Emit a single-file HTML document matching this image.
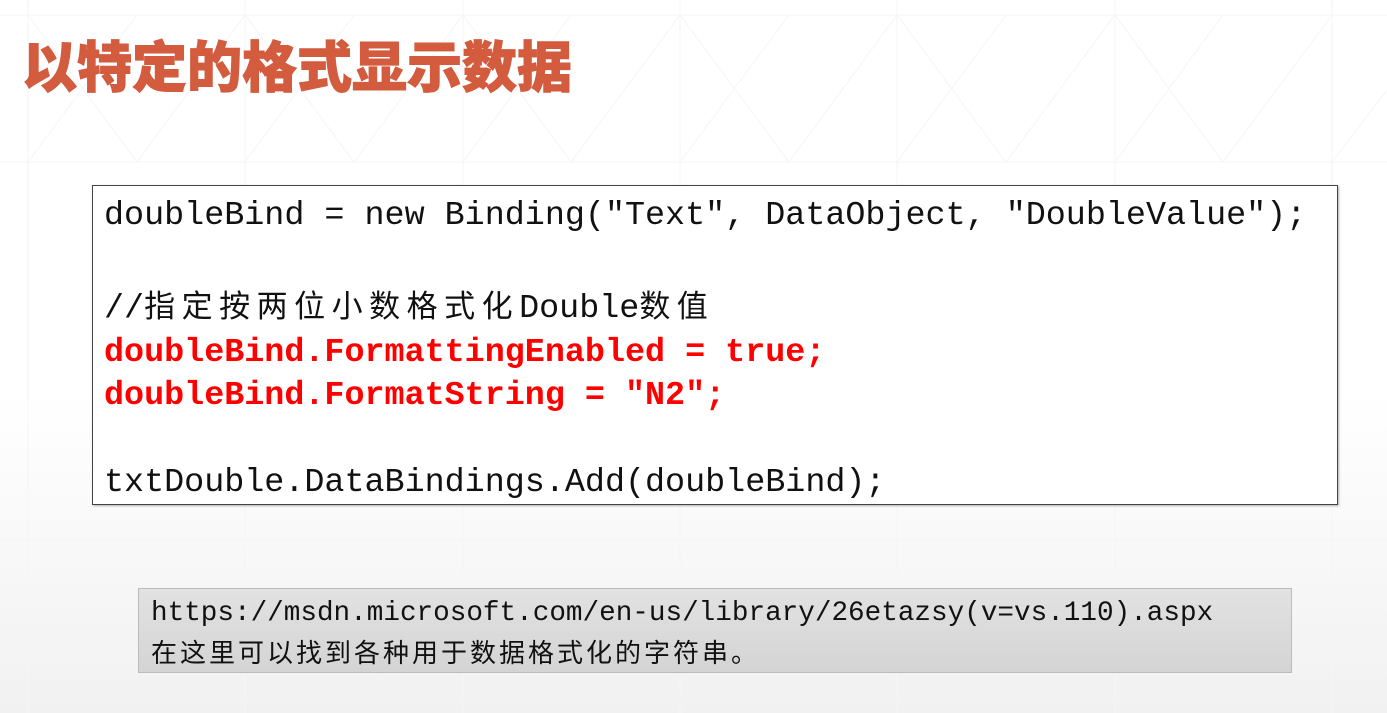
<!DOCTYPE html>
<html><head><meta charset="utf-8"><style>
html,body{margin:0;padding:0}
body{width:1387px;height:713px;position:relative;overflow:hidden;background:linear-gradient(#fff 0%,#fff 55%,#f1f1f1 100%);font-family:"Liberation Sans","Noto Sans CJK SC",sans-serif}
.bg{position:absolute;left:0;top:0}
h1{position:absolute;left:22px;top:28px;margin:0;font-size:55px;line-height:70px;font-weight:900;color:#d35b3e;font-family:"Noto Sans CJK SC",sans-serif;-webkit-text-stroke:1px #d35b3e}
.code{position:absolute;left:92px;top:185px;width:1244px;height:318px;border:1px solid #444;background:#fff;box-shadow:1px 1px 2px rgba(0,0,0,.3)}
.code pre{margin:0;position:absolute;left:11px;top:9px;font-family:"Liberation Mono","Noto Sans CJK SC",monospace;font-size:33.4px;line-height:43.5px;color:#111}
.red{color:#f00;font-weight:bold}
.cj{font-family:"Noto Sans CJK SC",sans-serif;letter-spacing:6.5px;font-size:31px}
.note{position:absolute;left:138px;top:588px;width:1152px;height:83px;border:1px solid #bbb;background:linear-gradient(#e2e2e2,#d4d4d4)}
.note pre{margin:0;position:absolute;left:12px;top:6px;font-family:"Liberation Mono",monospace;font-size:27.66px;line-height:38px;color:#111}
.cj2{font-family:"Noto Sans CJK SC",sans-serif;letter-spacing:3px;font-size:26px}
</style></head><body>
<svg class="bg" width="1387" height="713">
<g stroke="#f5f5f5" stroke-width="1" fill="none">
<line x1="0" y1="15" x2="1387" y2="15"/><line x1="0" y1="162" x2="1387" y2="162"/><line x1="0" y1="540" x2="1387" y2="540"/>
<line x1="28" y1="0" x2="28" y2="713"/><line x1="245" y1="0" x2="245" y2="713"/><line x1="463" y1="0" x2="463" y2="713"/><line x1="680" y1="0" x2="680" y2="713"/><line x1="897" y1="0" x2="897" y2="713"/><line x1="1115" y1="0" x2="1115" y2="713"/><line x1="1332" y1="0" x2="1332" y2="713"/>
<path d="M28 15 L137 162 L245 15 L354 162 L463 15 L571 162 L680 15 L789 162 L897 15 L1006 162 L1115 15 L1223 162 L1332 15"/>
<path d="M28 162 L137 15 M245 162 L354 15 M463 162 L571 15 M680 162 L789 15 M897 162 L1006 15 M1115 162 L1223 15 M1332 162 L1387 90"/>
</g></svg>
<h1>以特定的格式显示数据</h1>
<div class="code"><pre>doubleBind = new Binding("Text", DataObject, "DoubleValue");

//<span class="cj">指定按两位小数格式化</span>Double<span class="cj">数值</span>
<span class="red">doubleBind.FormattingEnabled = true;</span>
<span class="red">doubleBind.FormatString = "N2";</span>

txtDouble.DataBindings.Add(doubleBind);</pre></div>
<div class="note"><pre>https://msdn.microsoft.com/en-us/library/26etazsy(v=vs.110).aspx
<span class="cj2">在这里可以找到各种用于数据格式化的字符串。</span></pre></div>
</body></html>
